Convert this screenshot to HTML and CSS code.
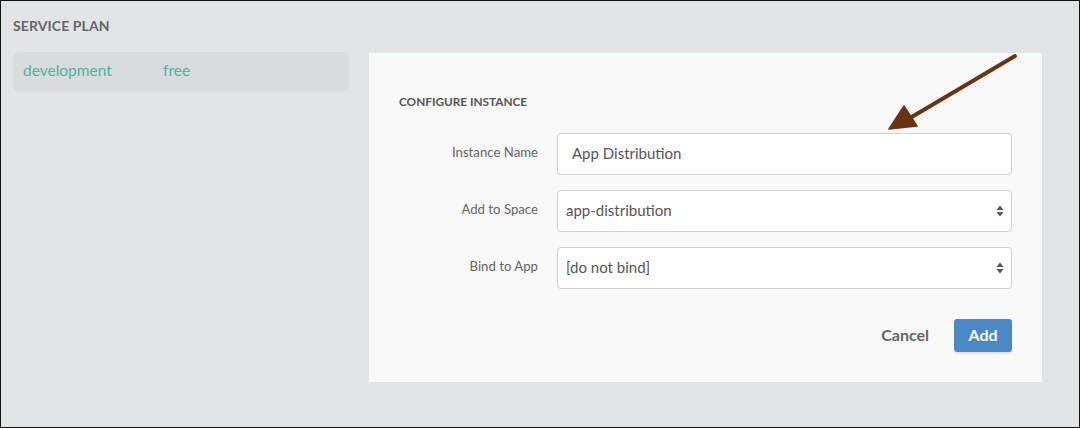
FILE: index.html
```html
<!DOCTYPE html>
<html>
<head>
<meta charset="utf-8">
<link rel="stylesheet" href="styles.css">
</head>
<body>
<div class="frame">
  <div class="section-title">SERVICE PLAN</div>
  <div class="content">
    <div class="plans">
      <div class="plan-row">
        <span class="plan-name">development</span>
        <span class="plan-price">free</span>
      </div>
    </div>
    <div class="panel">
      <div class="panel-title">CONFIGURE INSTANCE</div>
      <div class="form">
        <div class="form-row">
          <label class="label">Instance Name</label>
          <div class="field input">App Distribution</div>
        </div>
        <div class="form-row">
          <label class="label">Add to Space</label>
          <div class="field select">app-distribution
            <svg class="caret" width="8" height="14" viewBox="0 0 8 14"><path d="M4 1.5 L7.5 6 L0.5 6 Z M0.5 8 L7.5 8 L4 12.5 Z" fill="#555"/></svg>
          </div>
        </div>
        <div class="form-row">
          <label class="label">Bind to App</label>
          <div class="field select">[do not bind]
            <svg class="caret" width="8" height="14" viewBox="0 0 8 14"><path d="M4 1.5 L7.5 6 L0.5 6 Z M0.5 8 L7.5 8 L4 12.5 Z" fill="#555"/></svg>
          </div>
        </div>
      </div>
      <div class="actions">
        <button class="btn-cancel">Cancel</button>
        <button class="btn-add">Add</button>
      </div>
    </div>
  </div>
  <svg class="annotation" width="140" height="90" viewBox="0 0 140 90">
    <line x1="135" y1="4" x2="30" y2="66" stroke="#6b3410" stroke-width="4" stroke-linecap="round"/>
    <path d="M9 77 L24 54 L37 74 Z" fill="#6b3410" stroke="#6b3410" stroke-width="1.5" stroke-linejoin="round"/>
  </svg>
</div>
</body>
</html>
```
FILE: styles.css
```css
html, body {
  margin: 0;
  padding: 0;
}
body {
  width: 1080px;
  height: 428px;
  overflow: hidden;
  font-family: Lato, "Open Sans", sans-serif;
}
.frame {
  position: relative;
  box-sizing: border-box;
  width: 1080px;
  height: 428px;
  border: 1px solid #111;
  background: #e0e4e4;
  padding: 15px 0 0 12px;
}
.section-title {
  font-size: 14px;
  font-weight: 700;
  color: #666;
  line-height: 20px;
  height: 20px;
  letter-spacing: 0.1px;
}
.content {
  display: flex;
  gap: 20px;
  margin-top: 16px;
  align-items: flex-start;
}
.plans {
  width: 336px;
}
.plan-row {
  box-sizing: border-box;
  display: flex;
  align-items: center;
  height: 39px;
  background: #d7dbdb;
  border-radius: 5px;
  padding-left: 10px;
  padding-bottom: 3px;
  font-size: 15.5px;
  color: #4fb3a3;
}
.plan-name {
  width: 140px;
}
.panel {
  box-sizing: border-box;
  width: 673px;
  height: 329px;
  margin-top: 1px;
  background: #f8f8f8;
  padding: 42px 30px 30px 30px;
}
.panel-title {
  font-size: 11.8px;
  font-weight: 700;
  color: #555;
  line-height: 14px;
  height: 14px;
}
.form {
  margin-top: 24px;
  display: flex;
  flex-direction: column;
  gap: 15px;
}
.form-row {
  display: flex;
  align-items: center;
  gap: 19px;
}
.label {
  width: 139px;
  text-align: right;
  font-size: 13.2px;
  color: #666;
  padding-bottom: 4px;
}
.field {
  box-sizing: border-box;
  width: 455px;
  height: 42px;
  background: #fff;
  border: 1px solid #cfcfcf;
  border-radius: 4px;
  display: flex;
  align-items: center;
  padding-bottom: 3px;
  font-size: 15px;
  color: #555;
  position: relative;
}
.input {
  padding-left: 14px;
}
.select {
  padding-left: 8px;
}
.caret {
  position: absolute;
  right: 7px;
  top: 13px;
}
.actions {
  margin-top: 30px;
  display: flex;
  justify-content: flex-end;
  align-items: center;
  gap: 25px;
}
.btn-cancel {
  border: 0;
  background: none;
  padding: 0 0 2px 0;
  font-family: inherit;
  font-size: 16px;
  font-weight: 700;
  color: #666;
}
.btn-add {
  border: 0;
  width: 58px;
  height: 33px;
  border-radius: 3px;
  background: #4a88c8;
  color: #fff;
  font-family: inherit;
  font-size: 16px;
  font-weight: 700;
  padding: 0 0 2px 0;
  box-shadow: 0 2px 0 #e6e6e6;
}
.annotation {
  position: absolute;
  left: 879px;
  top: 51px;
}
```
